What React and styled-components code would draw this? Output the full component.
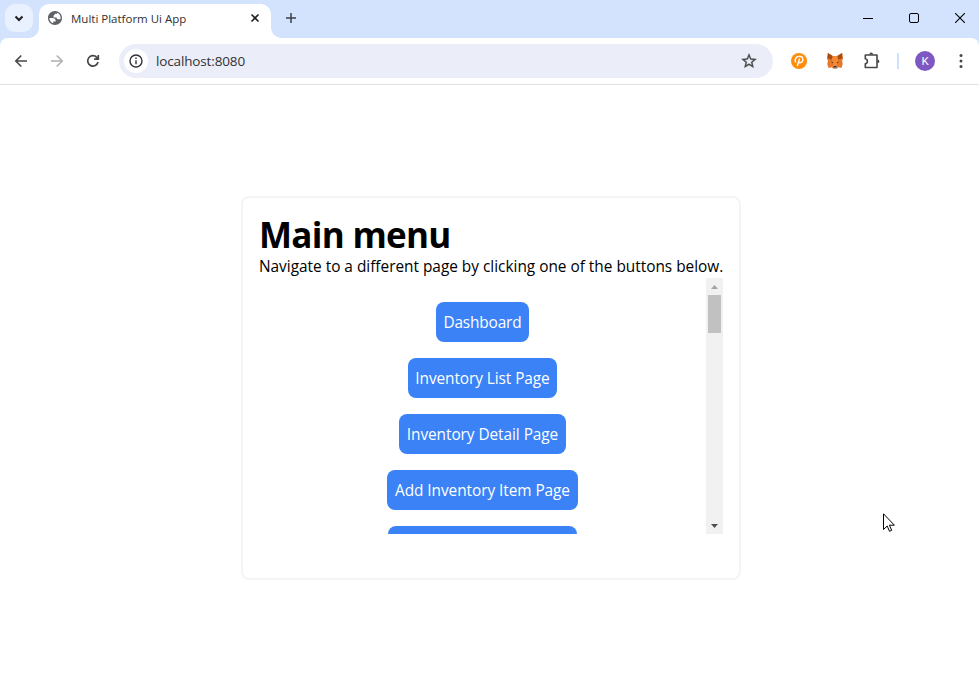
import React from 'react';
import styled, { createGlobalStyle } from 'styled-components';

const Global = createGlobalStyle`
  * { box-sizing: border-box; }
  html, body { margin: 0; background: #fff; overflow: hidden; }
  body { font-family: "Open Sans", "Noto Sans", sans-serif; color: #000; }
  svg { display: block; flex: none; }
  h1, p { margin: 0; }
`;

const Window = styled.div`
  width: 979px;
  height: 688px;
  display: flex;
  flex-direction: column;
  background: #d3e2fd;
  overflow: hidden;
`;

const TabStrip = styled.header`
  height: 38px;
  flex: none;
  display: flex;
  padding: 4px 0 0 5px;
`;

const TabSearch = styled.button`
  width: 28px;
  height: 28px;
  padding: 0;
  border: 0;
  border-radius: 10px;
  background: #e9f0fe;
  display: grid;
  place-items: center;
`;

const Tab = styled.div`
  position: relative;
  width: 232px;
  height: 34px;
  margin-left: 6px;
  padding: 0 11px 6px 9px;
  display: flex;
  align-items: center;
  background: #fff;
  border-radius: 10px 10px 0 0;
  &::before, &::after {
    content: "";
    position: absolute;
    bottom: 0;
    width: 10px;
    height: 10px;
  }
  &::before { left: -10px; background: radial-gradient(circle at 0 0, transparent 9.5px, #fff 10px); }
  &::after { right: -10px; background: radial-gradient(circle at 100% 0, transparent 9.5px, #fff 10px); }
`;

const TabTitle = styled.span`
  flex: 1;
  margin-left: 9px;
  padding-top: 2px;
  font-size: 11.5px;
  line-height: 16px;
  color: #303030;
  white-space: nowrap;
`;

const StripButton = styled.div`
  width: 40px;
  height: 28px;
  display: grid;
  place-items: center;
`;

const WindowControls = styled.div`
  margin-left: auto;
  display: flex;
`;

const Control = styled.div`
  width: 46px;
  height: 28px;
  display: grid;
  place-items: center;
  &:last-child { width: 38px; margin-left: 4px; }
`;

const Toolbar = styled.div`
  height: 47px;
  flex: none;
  display: flex;
  align-items: center;
  padding: 0 0 1px 12px;
  background: #fff;
  border-bottom: 1px solid #dfe1e3;
  border-radius: 8px 8px 0 0;
`;

const NavButton = styled.div`
  width: 18px;
  height: 18px;
  flex: none;
  margin-right: ${(p) => p.$gap}px;
`;

const AddressBar = styled.div`
  width: 654px;
  height: 34px;
  flex: none;
  padding: 0 15px 0 5px;
  display: flex;
  align-items: center;
  border-radius: 17px;
  background: #ebeef8;
`;

const SiteInfo = styled.div`
  width: 24px;
  height: 24px;
  border-radius: 50%;
  background: #fff;
  display: grid;
  place-items: center;
`;

const Url = styled.span`
  flex: 1;
  margin-left: 8px;
  font-size: 13.5px;
  line-height: 20px;
  color: #303236;
  letter-spacing: -0.14px;
`;

const Extensions = styled.div`
  flex: 1;
  display: flex;
  align-items: center;
  padding-left: 17px;
`;

const Slot = styled.div`
  width: ${(p) => p.$w}px;
  flex: none;
  display: flex;
  justify-content: center;
`;

const Divider = styled.div`
  width: 2px;
  height: 16px;
  flex: none;
  margin-left: 16px;
  background: #cfe1fc;
`;

const Avatar = styled.div`
  width: 20px;
  height: 20px;
  flex: none;
  margin-left: 16px;
  border-radius: 50%;
  background: #7e57c2;
  color: #fff;
  font: 11.5px/21px Roboto, sans-serif;
  text-align: center;
`;

const Page = styled.main`
  flex: 1;
  padding: 111px 0 0 241px;
  background: #fff;
`;

const Card = styled.section`
  width: 500px;
  height: 384px;
  padding: 16px;
  border: 2px solid #f3f4f6;
  border-radius: 8px;
`;

const Title = styled.h1`
  font-size: 35px;
  line-height: 38px;
  font-weight: 700;
  padding-top: 2px;
  height: 40px;
  white-space: nowrap;
  letter-spacing: -0.7px;
`;

const Intro = styled.p`
  height: 24px;
  padding-top: 1px;
  font-size: 15.4px;
  line-height: 23px;
  white-space: nowrap;
  letter-spacing: -0.01px;
`;

const Scroller = styled.div`
  width: 464px;
  height: 256px;
  display: flex;
  overflow: hidden;
`;

const Menu = styled.nav`
  flex: 1;
  padding-top: 24px;
  display: flex;
  flex-direction: column;
  align-items: center;
  gap: 16px;
`;

const MenuButton = styled.button`
  flex: none;
  width: ${(p) => p.$w}px;
  height: 40px;
  padding: 2px 0 0;
  border: 0;
  border-radius: 8px;
  background: #3b82f6;
  color: #fff;
  font: 15.4px/24px "Open Sans", sans-serif;
  white-space: nowrap;
  letter-spacing: ${(p) => p.$track}px;
`;

const Scrollbar = styled.div`
  width: 17px;
  background: #f1f1f1;
  display: flex;
  flex-direction: column;
  align-items: center;
`;

const Thumb = styled.div`
  width: 13px;
  height: 38px;
  margin-bottom: auto;
  background: #c1c1c1;
`;

const ScrollArrow = styled.div`
  width: 17px;
  height: 17px;
  display: grid;
  place-items: center;
`;

const Pointer = styled.div`
  position: absolute;
  left: 883px;
  top: 513px;
`;

const items = [
  { label: 'Dashboard', w: 93, track: -0.15 },
  { label: 'Inventory List Page', w: 149, track: -0.08 },
  { label: 'Inventory Detail Page', w: 167, track: -0.06 },
  { label: 'Add Inventory Item Page', w: 191, track: -0.06 },
  { label: '', w: 189, track: 0 },
];

const Globe = () => (
  <svg width="14" height="14" viewBox="2 2 20 20" fill="#5f6368">
    <path d="M12 2C6.480 2 2 6.480 2 12s4.480 10 10 10 10-4.480 10-10S17.520 2 12 2zM4 12h4.400c3.407.022 4.922 1.730 4.543 5.127H9.488v2.470A8.004 8.004 0 0 1 4 12zm7.638-4.380v-1.750h3.500V4.630A8.010 8.010 0 0 1 20 12c0 .64-.08 1.260-.22 1.860h-3.640c-1.140 0-1.700-.57-1.700-1.700v-.900h-4.540V9.370c0-1.160.58-1.750 1.738-1.750z" />
  </svg>
);

const Fox = () => (
  <svg width="16" height="16" viewBox="0 0 18 16" preserveAspectRatio="none">
    <path d="M1 0 6.500 3h5L17 0l1 5-1 3 .7 3-1.400 4-3.800-.7L11 16H7l-1.500-1.700-3.800.7L.3 11 1 8 0 5z" fill="#e8792b" />
    <path d="M1 0 6.500 3 5.500 6.500.800 5.500zM17 0l-5.500 3 1 3.500 4.700-1z" fill="#a84c16" />
    <path d="M6.500 3h5l1 4-1.700 5H7.200L5.500 7z" fill="#f58a32" />
    <path d="m4.500 8.500 2.500.8-.5 1.200zM13.500 8.500l-2.500.8.5 1.200z" fill="#4a3a38" />
    <path d="m7 12.500h4l.5 2.500L11 16H7l-.5-1z" fill="#c8a890" />
    <path d="M7.500 13h3l.3 1.500H7.200z" fill="#3a2a26" />
  </svg>
);

export default function App() {
  return (
    <>
      <Global />
      <Window>
        <TabStrip>
          <TabSearch>
            <svg width="10" height="7" viewBox="0 0 10 7" fill="none" stroke="#1f1f1f" strokeWidth="2"><path d="m1.500 1.500 3.500 3.500 3.500-3.500" /></svg>
          </TabSearch>
          <Tab>
            <Globe />
            <TabTitle>Multi Platform Ui App</TabTitle>
            <svg width="10" height="10" viewBox="0 0 10 10" stroke="#1f1f1f" strokeWidth="1.600"><path d="m1.500 1.500 7 7m0-7-7 7" /></svg>
          </Tab>
          <StripButton>
            <svg width="10" height="10" viewBox="0 0 10 10" stroke="#3c4043" strokeWidth="1.500"><path d="M5 0v10M0 5h10" /></svg>
          </StripButton>
          <WindowControls>
            <Control><svg width="10" height="10" viewBox="0 0 10 10" stroke="#000"><path d="M0 5.500h10" /></svg></Control>
            <Control><svg width="10" height="10" viewBox="0 0 10 10" fill="none" stroke="#000"><rect x=".5" y=".5" width="9" height="9" rx="1.500" /></svg></Control>
            <Control><svg width="10" height="10" viewBox="0 0 10 10" stroke="#000" strokeWidth="1.100"><path d="m0 0 10 10M10 0 0 10" /></svg></Control>
          </WindowControls>
        </TabStrip>
        <Toolbar>
          <NavButton $gap={18}><svg width="18" height="18" viewBox="0 0 18 18" fill="none" stroke="#474747" strokeWidth="1.600"><path d="M15 9H4M9.300 3.500 3.800 9l5.500 5.500" /></svg></NavButton>
          <NavButton $gap={18}><svg width="18" height="18" viewBox="0 0 18 18" fill="none" stroke="#b0b0b0" strokeWidth="1.600"><path d="M3 9h11M8.700 3.500 14.200 9l-5.500 5.500" /></svg></NavButton>
          <NavButton $gap={17}><svg width="18" height="18" viewBox="0 0 18 18" fill="none" stroke="#474747" strokeWidth="1.700"><path d="M14 10a5.200 5.200 0 1 1-1.300-4.700L14.300 7M14.300 3v4.200h-4.200" /></svg></NavButton>
          <AddressBar>
            <SiteInfo>
              <svg width="14" height="14" viewBox="0 0 14 14" fill="none" stroke="#303236" strokeWidth="1.400"><circle cx="7" cy="7" r="6" /><path d="M7 6.300v4M7 3.500v1.500" /></svg>
            </SiteInfo>
            <Url>localhost:8080</Url>
            <svg width="18" height="18" viewBox="0 0 24 24" fill="#474747" stroke="#474747" strokeWidth=".4"><path d="m22 9.240-7.190-.62L12 2 9.190 8.630 2 9.240l5.460 4.730L5.820 21 12 17.270 18.180 21l-1.630-7.030L22 9.240zM12 15.400l-3.760 2.270 1-4.280-3.320-2.880 4.380-.38L12 6.100l1.710 4.040 4.380.38-3.320 2.880 1 4.280L12 15.400z" /></svg>
          </AddressBar>
          <Extensions>
            <Slot $w={18}><svg width="16" height="16" viewBox="0 0 16 16"><circle cx="8" cy="8" r="8" fill="#ff8c0a" /><path d="M4.700 9.500C3 5.200 6 3.300 8.500 3.300c4.500 0 4.500 6.400.2 6.400-1.200 0-1.900-.5-1.900-.5M8.600 5.500 6.300 13" fill="none" stroke="#fff" strokeWidth="1.400" /></svg></Slot>
            <Slot $w={54}><Fox /></Slot>
            <Slot $w={19}><svg width="18" height="18" viewBox="0 0 18 18"><path d="M2.300 3H14v12.500H2.300v-3.700a2.600 2.600 0 0 0 0-5.100z" fill="none" stroke="#474747" strokeWidth="1.600" strokeLinejoin="round" /><path d="M6.300 2.500a1.900 1.900 0 0 1 3.800 0zM14.500 7.400a1.900 1.900 0 0 1 0 3.800z" fill="#474747" /></svg></Slot>
            <Divider />
            <Avatar>K</Avatar>
            <Slot $w={52}><svg width="4" height="16" viewBox="0 0 4 16" fill="#474747"><circle cx="2" cy="2.500" r="1.500" /><circle cx="2" cy="8" r="1.500" /><circle cx="2" cy="13.500" r="1.500" /></svg></Slot>
          </Extensions>
        </Toolbar>
        <Page>
          <Card>
            <Title>Main menu</Title>
            <Intro>Navigate to a different page by clicking one of the buttons below.</Intro>
            <Scroller>
              <Menu>
                {items.map((i) => <MenuButton key={i.w} $w={i.w} $track={i.track}>{i.label}</MenuButton>)}
              </Menu>
              <Scrollbar>
                <ScrollArrow><svg width="7" height="4" viewBox="0 0 7 4" fill="#a3a3a3"><path d="M0 4 3.500 0 7 4z" /></svg></ScrollArrow>
                <Thumb />
                <ScrollArrow><svg width="7" height="4" viewBox="0 0 7 4" fill="#505050"><path d="m0 0 3.500 4L7 0z" /></svg></ScrollArrow>
              </Scrollbar>
            </Scroller>
          </Card>
        </Page>
        <Pointer>
          <svg width="12" height="19" viewBox="0 0 12 19" fill="#fff" stroke="#000"><path d="M.5.8v15.700l3.700-3.500 2.300 5.300 2.200-1-2.300-5.100h5z" /></svg>
        </Pointer>
      </Window>
    </>
  );
}
